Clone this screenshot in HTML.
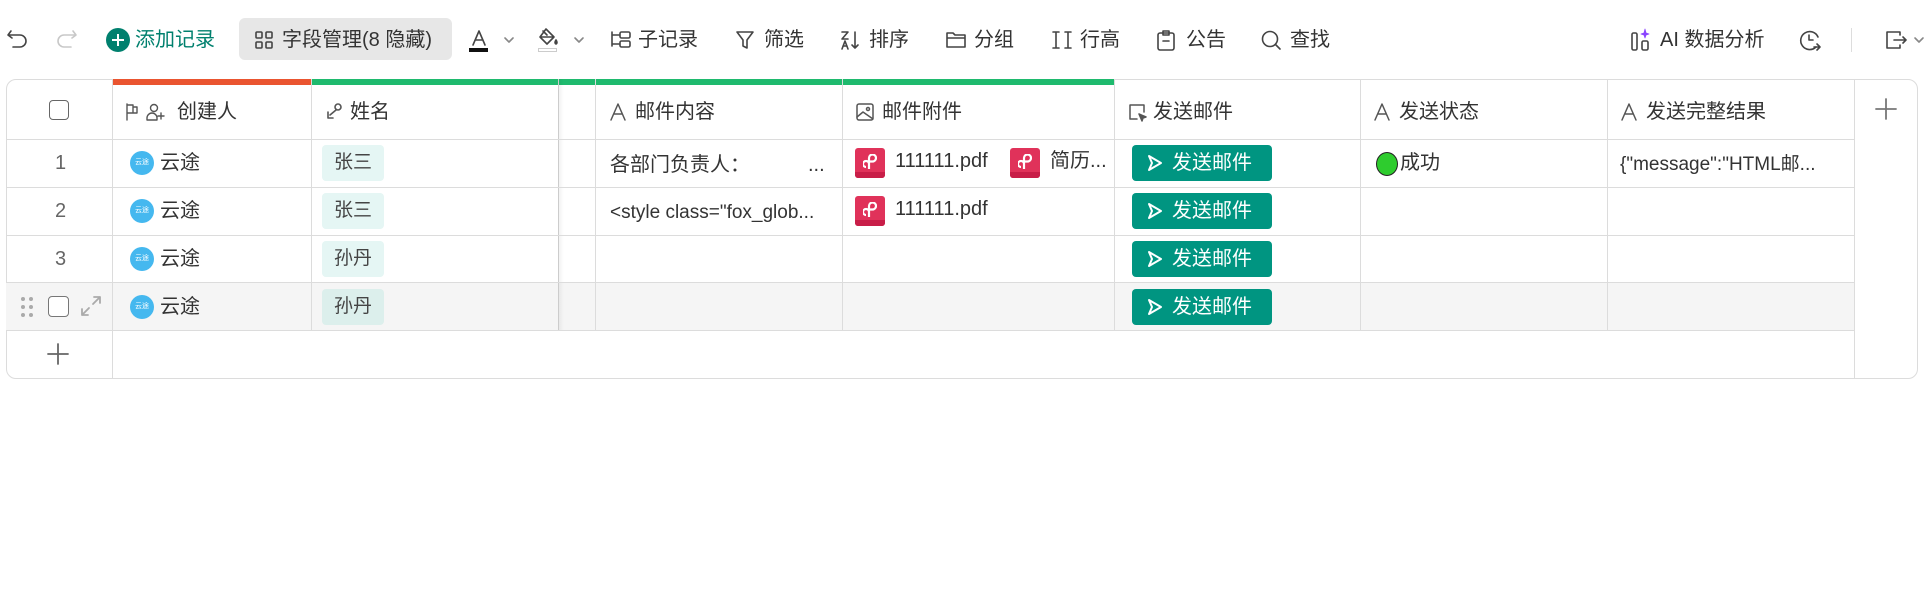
<!DOCTYPE html>
<html><head><meta charset="utf-8"><style>
*{margin:0;padding:0;box-sizing:border-box}
body{width:1925px;height:590px;background:#fff;font-family:"Liberation Sans","Noto Sans CJK SC",sans-serif;color:#333;position:relative;overflow:hidden}
.a{position:absolute}
.tb{font-size:20px;color:#333;top:27px;line-height:26px;white-space:nowrap}
svg.i{position:absolute;fill:none;stroke:#444;stroke-width:1.6;stroke-linecap:round;stroke-linejoin:round}
.vl{position:absolute;top:79px;width:1px;background:#dcdcdc}
.hl{position:absolute;left:6px;width:1848px;height:1px;background:#dcdcdc}
.ht{position:absolute;top:99px;font-size:20px;line-height:26px;color:#333;white-space:nowrap}
.c{position:absolute;font-size:20px;line-height:26px;color:#333;white-space:nowrap}
.av{position:absolute;width:24px;height:24px;border-radius:50%;background:#45b8ef;color:#fff;font-size:7px;line-height:24px;text-align:center}
.tag{position:absolute;left:322px;width:62px;height:36px;border-radius:4px;background:#e5f6f4;font-size:19px;line-height:36px;text-align:center;color:#444}
.btn{position:absolute;left:1132px;width:140px;height:36px;border-radius:4px;background:#009581;color:#fff;font-size:20px;line-height:36px;padding-left:40px}
.btn svg{position:absolute;left:15px;top:9px}
.pdf{position:absolute;width:30px;height:30px;border-radius:3px;background:#e0325a;overflow:hidden}
.pdf:after{content:"";position:absolute;left:0;right:0;bottom:0;height:6px;background:#c81e48}
.pdf svg{position:absolute;left:8px;top:6px}
</style></head><body>
<!-- toolbar -->
<svg class="i" style="left:6px;top:28px" width="24" height="22" viewBox="0 0 24 22"><path d="M5 3 L2 7 L6 10 M2 7 H14 a6 6 0 0 1 0 12 H7"/></svg>
<svg class="i" style="left:54px;top:28px;stroke:#c8c8c8" width="24" height="22" viewBox="0 0 24 22"><path d="M19 3 L22 7 L18 10 M22 7 H10 a6 6 0 0 0 0 12 H17"/></svg>
<div class="a" style="left:106px;top:28px;width:24px;height:24px;border-radius:50%;background:#00806e"></div>
<div class="a" style="left:112px;top:39px;width:12px;height:2.4px;background:#fff"></div>
<div class="a" style="left:116.8px;top:34px;width:2.4px;height:12px;background:#fff"></div>
<div class="a tb" style="left:135px;color:#00806e">添加记录</div>
<div class="a" style="left:239px;top:18px;width:213px;height:42px;border-radius:6px;background:#e7e7e7"></div>
<svg class="i" style="left:254px;top:30px" width="20" height="20" viewBox="0 0 20 20"><rect x="2" y="2" width="6" height="6" rx="1"/><rect x="12" y="2" width="6" height="6" rx="1"/><rect x="2" y="12" width="6" height="6" rx="1"/><rect x="12" y="12" width="6" height="6" rx="1"/></svg>
<div class="a tb" style="left:282px">字段管理(8 隐藏)</div>
<svg class="i" style="left:468px;top:28px" width="22" height="24" viewBox="0 0 22 24"><path d="M5 17 L11 3 L17 17 M7.5 12 H14.5"/></svg>
<div class="a" style="left:469px;top:48px;width:19px;height:4px;background:#111"></div>
<svg class="i" style="left:503px;top:36px;stroke:#888" width="12" height="8" viewBox="0 0 12 8"><path d="M2 2 L6 6 L10 2"/></svg>
<svg class="i" style="left:537px;top:27px" width="24" height="26" viewBox="0 0 24 26"><path d="M9 2 L17 10 L10 17 L3 10 Z M6 4 L10 8 M3 10 H17"/><path d="M19 13 q2 3 0 4 q-2 -1 0 -4" fill="#444"/></svg>
<div class="a" style="left:538px;top:48px;width:19px;height:4px;border:1px solid #ccc"></div>
<svg class="i" style="left:573px;top:36px;stroke:#888" width="12" height="8" viewBox="0 0 12 8"><path d="M2 2 L6 6 L10 2"/></svg>
<svg class="i" style="left:610px;top:30px" width="22" height="20" viewBox="0 0 22 20"><path d="M2 2 V16 M2 5 H9 M2 14 H9"/><rect x="10" y="2" width="10" height="6" rx="1.5"/><rect x="10" y="11" width="10" height="6" rx="1.5"/></svg>
<div class="a tb" style="left:638px">子记录</div>
<svg class="i" style="left:735px;top:30px" width="20" height="20" viewBox="0 0 20 20"><path d="M2 2 H18 L12 10 V18 L8 16 V10 Z"/></svg>
<div class="a tb" style="left:764px">筛选</div>
<svg class="i" style="left:840px;top:29px" width="22" height="22" viewBox="0 0 22 22"><path d="M2 3 H8 L2 10 H8 M2 20 L5 12 L8 20 M3 17 H7 M15 3 V19 M12 16 L15 19 L18 16"/></svg>
<div class="a tb" style="left:869px">排序</div>
<svg class="i" style="left:945px;top:31px" width="22" height="18" viewBox="0 0 22 18"><path d="M2 2 H8 L10 4 H20 V16 H2 Z M2 7 H20"/></svg>
<div class="a tb" style="left:974px">分组</div>
<svg class="i" style="left:1051px;top:30px" width="22" height="20" viewBox="0 0 22 20"><path d="M2 2 H8 M2 18 H8 M5 2 V18 M14 2 H20 M14 18 H20 M17 2 V18"/></svg>
<div class="a tb" style="left:1080px">行高</div>
<svg class="i" style="left:1156px;top:28px" width="20" height="24" viewBox="0 0 20 24"><rect x="2" y="5" width="16" height="17" rx="2"/><path d="M7 3 H13 V7 H7 Z M7 13 H13"/></svg>
<div class="a tb" style="left:1186px">公告</div>
<svg class="i" style="left:1260px;top:29px" width="22" height="22" viewBox="0 0 22 22"><circle cx="10" cy="10" r="7.5"/><path d="M15.5 15.5 L20 20"/></svg>
<div class="a tb" style="left:1290px">查找</div>
<svg class="i" style="left:1630px;top:27px" width="24" height="26" viewBox="0 0 24 26"><rect x="2" y="6" width="5" height="17" rx="1.5"/><rect x="12" y="14" width="6" height="9" rx="1.5"/><path d="M15 2 L16 6 L19 7 L16 8 L15 11 L14 8 L11 7 L14 6 Z" fill="#8b45ff" stroke="#8b45ff" stroke-width="0.8"/></svg>
<div class="a tb" style="left:1660px">AI 数据分析</div>
<svg class="i" style="left:1798px;top:28px" width="26" height="24" viewBox="0 0 26 24"><path d="M18 19 A9 9 0 1 1 20 9"/><path d="M11 7 V12 H15 M16 19 H22 M19 16 L22 19 L19 22"/></svg>
<div class="a" style="left:1851px;top:28px;width:1px;height:24px;background:#ddd"></div>
<svg class="i" style="left:1884px;top:29px" width="26" height="22" viewBox="0 0 26 22"><path d="M16 6 V3 H3 V19 H16 V16 M10 11 H22 M19 8 L22 11 L19 14"/></svg>
<svg class="i" style="left:1913px;top:36px;stroke:#888" width="12" height="8" viewBox="0 0 12 8"><path d="M2 2 L6 6 L10 2"/></svg>

<!-- table frame -->
<div class="a" style="left:6px;top:79px;width:1912px;height:300px;border:1px solid #dcdcdc;border-radius:10px"></div>
<div class="a" style="left:6px;top:283px;width:1848px;height:47px;background:#f5f5f5"></div>
<div class="a" style="left:112px;top:79px;width:199px;height:6px;background:#ea5530"></div>
<div class="a" style="left:312px;top:79px;width:802px;height:6px;background:#1fba6e"></div>
<div class="a" style="left:558px;top:79px;width:6px;height:251px;background:linear-gradient(90deg,rgba(0,0,0,.06),rgba(0,0,0,0))"></div>
<div class="vl" style="left:112px;height:300px"></div>
<div class="vl" style="left:311px;height:251px"></div>
<div class="vl" style="left:558px;height:251px;background:#ccc"></div>
<div class="vl" style="left:595px;height:251px"></div>
<div class="vl" style="left:842px;height:251px"></div>
<div class="vl" style="left:1114px;height:251px"></div>
<div class="vl" style="left:1360px;height:251px"></div>
<div class="vl" style="left:1607px;height:251px"></div>
<div class="vl" style="left:1854px;height:300px"></div>
<div class="hl" style="top:139px"></div>
<div class="hl" style="top:187px"></div>
<div class="hl" style="top:235px"></div>
<div class="hl" style="top:282px"></div>
<div class="hl" style="top:330px"></div>

<!-- header -->
<div class="a" style="left:49px;top:100px;width:20px;height:20px;border:1.6px solid #666;border-radius:4px"></div>
<svg class="i" style="left:124px;top:101px;stroke:#555;stroke-width:1.4" width="46" height="22" viewBox="0 0 46 22"><path d="M3 3 V19 M3 4 H9 V12 H3 M9 6 H13 V12 H9"/><circle cx="30" cy="7" r="3.5"/><path d="M23 19 V17 a5 5 0 0 1 10 0 V19 Z M37 12 V18 M34 15 H40"/></svg>
<div class="ht" style="left:177px">创建人</div>
<svg class="i" style="left:324px;top:101px;stroke:#555;stroke-width:1.6" width="20" height="22" viewBox="0 0 20 22"><circle cx="14" cy="6" r="3"/><path d="M12 9 L6 14 M4 11 L4 17 L9 17"/></svg>
<div class="ht" style="left:350px">姓名</div>
<svg class="i" style="left:609px;top:101px;stroke:#555;stroke-width:1.5" width="18" height="22" viewBox="0 0 18 22"><path d="M2 19 L9 3 L16 19 M5 13 H13"/></svg>
<div class="ht" style="left:635px">邮件内容</div>
<svg class="i" style="left:855px;top:102px;stroke:#555;stroke-width:1.5" width="20" height="20" viewBox="0 0 20 20"><rect x="2" y="2" width="16" height="16" rx="2"/><path d="M2 15 L8 10 L18 17"/><circle cx="13" cy="7" r="1.5"/></svg>
<div class="ht" style="left:882px">邮件附件</div>
<svg class="i" style="left:1127px;top:102px;stroke:#555;stroke-width:1.5" width="22" height="22" viewBox="0 0 22 22"><path d="M10 17 H3 V3 H17 V10"/><path d="M12 12 L19 15 L16 16 L15 19 Z" fill="#555"/></svg>
<div class="ht" style="left:1153px">发送邮件</div>
<svg class="i" style="left:1373px;top:101px;stroke:#555;stroke-width:1.5" width="18" height="22" viewBox="0 0 18 22"><path d="M2 19 L9 3 L16 19 M5 13 H13"/></svg>
<div class="ht" style="left:1399px">发送状态</div>
<svg class="i" style="left:1620px;top:101px;stroke:#555;stroke-width:1.5" width="18" height="22" viewBox="0 0 18 22"><path d="M2 19 L9 3 L16 19 M5 13 H13"/></svg>
<div class="ht" style="left:1646px">发送完整结果</div>
<svg class="i" style="left:1874px;top:97px;stroke:#777;stroke-width:1.8" width="24" height="24" viewBox="0 0 24 24"><path d="M12 2 V22 M2 12 H22"/></svg>

<!-- rows -->
<div class="c" style="left:55px;top:150px;color:#666">1</div>
<div class="c" style="left:55px;top:198px;color:#666">2</div>
<div class="c" style="left:55px;top:246px;color:#666">3</div>
<svg class="a" style="left:20px;top:296px" width="14" height="22" viewBox="0 0 14 22"><g fill="#aaa"><circle cx="3" cy="3" r="2"/><circle cx="11" cy="3" r="2"/><circle cx="3" cy="11" r="2"/><circle cx="11" cy="11" r="2"/><circle cx="3" cy="19" r="2"/><circle cx="11" cy="19" r="2"/></g></svg>
<div class="a" style="left:48px;top:296px;width:21px;height:21px;border:1.6px solid #777;border-radius:4px;background:#fff"></div>
<svg class="i" style="left:80px;top:295px;stroke:#aaa;stroke-width:1.8" width="22" height="22" viewBox="0 0 22 22"><path d="M13 9 L20 2 M14 2 H20 V8 M9 13 L2 20 M2 14 V20 H8"/></svg>
<svg class="i" style="left:46px;top:342px;stroke:#666;stroke-width:1.8" width="24" height="24" viewBox="0 0 24 24"><path d="M12 2 V22 M2 12 H22"/></svg>

<div class="av" style="left:130px;top:151px">云途</div><div class="c" style="left:160px;top:150px">云途</div>
<div class="av" style="left:130px;top:199px">云途</div><div class="c" style="left:160px;top:198px">云途</div>
<div class="av" style="left:130px;top:247px">云途</div><div class="c" style="left:160px;top:246px">云途</div>
<div class="av" style="left:130px;top:295px">云途</div><div class="c" style="left:160px;top:294px">云途</div>

<div class="tag" style="top:145px">张三</div>
<div class="tag" style="top:193px">张三</div>
<div class="tag" style="top:241px">孙丹</div>
<div class="tag" style="top:289px;background:#dcefec">孙丹</div>

<div class="c" style="left:610px;top:152px">各部门负责人：</div>
<div class="c" style="left:808px;top:152px">...</div>
<div class="c" style="left:610px;top:200px;font-size:19px">&lt;style class="fox_glob...</div>

<div class="pdf" style="left:855px;top:148px"><svg width="14" height="16" viewBox="0 0 14 16" fill="none" stroke="#fff" stroke-width="2.2"><path d="M6 15 V4 a3.5 3.5 0 1 1 3.5 3.5 H6 M6 10 a3 3 0 1 0 -3 3"/></svg></div>
<div class="c" style="left:895px;top:148px">111111.pdf</div>
<div class="pdf" style="left:1010px;top:148px"><svg width="14" height="16" viewBox="0 0 14 16" fill="none" stroke="#fff" stroke-width="2.2"><path d="M6 15 V4 a3.5 3.5 0 1 1 3.5 3.5 H6 M6 10 a3 3 0 1 0 -3 3"/></svg></div>
<div class="c" style="left:1050px;top:148px">简历...</div>
<div class="pdf" style="left:855px;top:196px"><svg width="14" height="16" viewBox="0 0 14 16" fill="none" stroke="#fff" stroke-width="2.2"><path d="M6 15 V4 a3.5 3.5 0 1 1 3.5 3.5 H6 M6 10 a3 3 0 1 0 -3 3"/></svg></div>
<div class="c" style="left:895px;top:196px">111111.pdf</div>

<div class="btn" style="top:145px"><svg width="16" height="18" viewBox="0 0 16 18" fill="none" stroke="#fff" stroke-width="2" stroke-linejoin="round"><path d="M2 2 L14 9 L2 16 L5 9 Z"/></svg>发送邮件</div>
<div class="btn" style="top:193px"><svg width="16" height="18" viewBox="0 0 16 18" fill="none" stroke="#fff" stroke-width="2" stroke-linejoin="round"><path d="M2 2 L14 9 L2 16 L5 9 Z"/></svg>发送邮件</div>
<div class="btn" style="top:241px"><svg width="16" height="18" viewBox="0 0 16 18" fill="none" stroke="#fff" stroke-width="2" stroke-linejoin="round"><path d="M2 2 L14 9 L2 16 L5 9 Z"/></svg>发送邮件</div>
<div class="btn" style="top:289px"><svg width="16" height="18" viewBox="0 0 16 18" fill="none" stroke="#fff" stroke-width="2" stroke-linejoin="round"><path d="M2 2 L14 9 L2 16 L5 9 Z"/></svg>发送邮件</div>

<div class="a" style="left:1376px;top:152px;width:22px;height:24px;border-radius:50%;background:#2ecc2e;border:1.5px solid #222"></div>
<div class="c" style="left:1400px;top:150px">成功</div>
<div class="c" style="left:1620px;top:152px;font-size:19px">{"message":"HTML邮...</div>
</body></html>
